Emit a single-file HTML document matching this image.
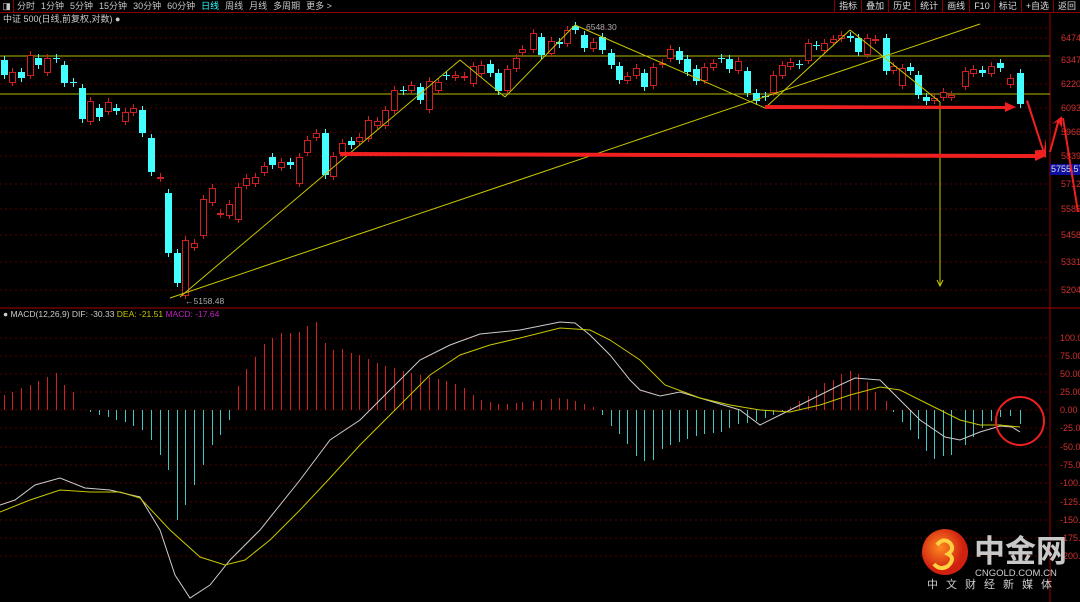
<!DOCTYPE html>
<html><head><meta charset="utf-8"><style>
html,body{margin:0;padding:0;background:#000;width:1080px;height:602px;overflow:hidden;font-family:"Liberation Sans","Noto Sans CJK SC",sans-serif}
#top{position:absolute;left:0;top:0;width:1080px;height:12px;border-bottom:1px solid #8a0000;font-size:9px;color:#c8c8c8;line-height:12px;white-space:nowrap}
#top span{margin-right:6px}
#rb{position:absolute;right:0;top:0;height:12px;display:flex}
#rb div{border-left:1px solid #8a0000;padding:0 4px;font-size:9px;color:#ddd;line-height:12px}
svg{position:absolute;left:0;top:0}
</style></head><body>
<svg id="s" width="1080" height="602" xmlns="http://www.w3.org/2000/svg"></svg>
<div id="top"><span style="display:inline-block;width:13px;border-right:1px solid #8a0000;margin-right:3px;text-align:center">◨</span><span>分时</span><span>1分钟</span><span>5分钟</span><span>15分钟</span><span>30分钟</span><span>60分钟</span><span style="color:#3ff">日线</span><span>周线</span><span>月线</span><span>多周期</span><span>更多 &gt;</span>
<div id="rb"><div>指标</div><div>叠加</div><div>历史</div><div>统计</div><div>画线</div><div>F10</div><div>标记</div><div>+自选</div><div>返回</div></div></div>
<script>
const s=document.getElementById('s');let h='';
const R='#d02020',C='#4ff';
const ax=[[38,'6474'],[60,'6347'],[84,'6220'],[108,'6093'],[132,'5966'],[156,'5839'],[184,'5712'],[209,'5585'],[235,'5458'],[262,'5331'],[290,'5204']];
ax.forEach(a=>{h+=`<line x1="0" x2="1050" y1="${a[0]}" y2="${a[0]}" stroke="#5a0000" stroke-dasharray="2,3"/><text x="1061" y="${a[0]+3}" fill="#d03030" font-size="9">${a[1]}</text>`});
const mx=[[338,'100.0'],[356,'75.00'],[374,'50.00'],[392,'25.00'],[410,'0.00'],[428,'-25.00'],[447,'-50.00'],[465,'-75.00'],[483,'-100.0'],[502,'-125.0'],[520,'-150.0'],[538,'-175.0'],[556,'-200.0']];
mx.forEach(a=>{h+=`<line x1="0" x2="1050" y1="${a[0]}" y2="${a[0]}" stroke="#5a0000" stroke-dasharray="2,3"/><text x="1060" y="${a[0]+3}" fill="#d03030" font-size="9">${a[1]}</text>`});
h+=`<line x1="0" x2="1050" y1="28" y2="28" stroke="#5a0000" stroke-dasharray="2,3"/>`;
h+=`<line x1="1050" x2="1050" y1="13" y2="602" stroke="#a00000"/><line x1="0" x2="1080" y1="308" y2="308" stroke="#a00000"/>`;
h+=`<rect x="1050" y="164" width="30" height="11" fill="#1010a0"/><text x="1051" y="172" fill="#ddd" font-size="9">5755.57</text>`;
h+=`<line x1="0" x2="1050" y1="56" y2="56" stroke="#b8b800"/><line x1="0" x2="1050" y1="94" y2="94" stroke="#b8b800"/>`;
h+=`<text x="3" y="22" fill="#ccc" font-size="9">中证 500(日线,前复权,对数) ●</text>`;
h+=`<text x="3" y="317" font-size="8.5"><tspan fill="#ccc">● MACD(12,26,9) DIF: -30.33 </tspan><tspan fill="#c8c800">DEA: -21.51 </tspan><tspan fill="#c020c0">MACD: -17.64</tspan></text>`;
const K=[[4,60,75,C],[12,72,82,R],[21,72,78,C],[30,55,75,R],[38,58,65,C],[47,58,72,R],[56,58,59,C],[64,65,83,C],[73,82,83,C],[82,88,119,C],[90,101,121,R],[99,108,117,C],[108,102,111,R],[116,108,111,C],[125,112,121,R],[133,108,112,R],[142,110,133,C],[151,138,172,C],[160,177,178,R],[168,193,253,C],[177,253,283,C],[185,240,295,R],[194,243,247,R],[203,199,235,R],[212,188,202,R],[220,213,214,R],[229,204,215,R],[238,187,219,R],[246,178,185,R],[255,177,183,R],[264,166,172,R],[272,157,165,C],[281,162,167,R],[290,162,165,C],[299,157,183,R],[307,140,152,R],[316,133,137,R],[325,133,175,C],[333,156,176,R],[342,143,153,R],[351,141,145,C],[359,137,141,R],[368,120,138,R],[377,121,125,R],[385,110,125,R],[394,90,110,R],[403,90,91,C],[411,85,90,R],[420,87,100,C],[429,81,109,R],[438,82,90,R],[446,75,76,C],[455,75,77,R],[464,76,77,R],[473,66,83,R],[481,65,73,R],[490,64,73,C],[498,73,91,C],[507,69,90,R],[516,58,68,R],[522,49,52,R],[533,33,49,R],[541,37,55,C],[551,41,53,R],[559,42,44,C],[567,30,43,R],[575,26,30,C],[584,35,48,C],[593,42,48,R],[602,37,50,C],[611,53,65,C],[619,66,80,C],[627,76,80,R],[636,68,75,R],[644,73,87,C],[653,67,85,R],[662,63,64,R],[670,49,58,R],[679,51,60,C],[687,59,72,C],[696,69,81,C],[704,67,80,R],[713,63,67,R],[721,58,59,C],[729,59,69,C],[738,61,70,R],[747,71,93,C],[756,93,101,C],[765,96,97,C],[773,75,92,R],[782,65,75,R],[790,62,66,R],[799,64,65,C],[808,43,60,R],[816,45,46,C],[824,43,50,R],[833,39,42,R],[841,35,38,R],[850,36,38,C],[858,38,52,C],[867,38,54,R],[875,39,40,R],[886,38,71,C],[893,66,70,R],[902,68,85,R],[910,67,71,C],[918,75,95,C],[926,97,101,C],[934,98,100,R],[943,92,97,R],[951,95,97,R],[965,71,86,R],[973,69,73,R],[982,70,73,C],[991,66,73,R],[1000,63,68,C],[1010,78,84,R],[1020,73,104,C]];
K.forEach(k=>{const[x,t,b,c]=k;const wt=t-4,wb=b+4;h+=`<line x1="${x+.5}" x2="${x+.5}" y1="${wt}" y2="${wb}" stroke="${c}"/>`;
if(c==C)h+=`<rect x="${x-3}" y="${t}" width="7" height="${Math.max(1,b-t)}" fill="${C}"/>`;else h+=`<rect x="${x-2.5}" y="${t+.5}" width="6" height="${Math.max(1,b-t)}" fill="#000" stroke="${R}"/>`;});
const Y='#c8c800';
[[180,297,460,60],[170,298,980,24],[460,60,505,97],[505,97,575,25],[575,25,765,108],[765,108,850,30],[850,30,940,102]].forEach(l=>h+=`<line x1="${l[0]}" y1="${l[1]}" x2="${l[2]}" y2="${l[3]}" stroke="${Y}" stroke-width="1"/>`);
h+=`<line x1="940" y1="102" x2="940" y2="285" stroke="${Y}"/><path d="M937 280 L940 286 L943 280" stroke="${Y}" fill="none"/>`;
h+=`<text x="586" y="30" fill="#aaa" font-size="8.5">6548.30</text><text x="185" y="304" fill="#aaa" font-size="8.5">←5158.48</text>`;
h+=`<path d="M340 152 L1035 154 L1035 150 L1046 156 L1035 161 L1035 158 L340 156Z" fill="#f02020"/>`;
h+=`<path d="M765 105 L1005 106 L1005 102 L1016 107 L1005 112 L1005 109 L765 109Z" fill="#f02020"/>`;
h+=`<path d="M1028 100 L1044 150 L1046 138 L1046 158 L1036 150 L1042 150 L1026 101Z" fill="#f02020"/>`;
h+=`<path d="M1049 152 L1057 122 L1052 124 L1062 116 L1062 128 L1059 123 L1051 152Z" fill="#f02020"/>`;
h+=`<path d="M1064 118 L1079 212 L1077 212 L1062 118Z" fill="#f02020"/>`;
// MACD bars by x keypoints
const P=[[0,14],[30,25],[56,37],[64,25],[73,18],[80,1],[90,-2],[110,-8],[125,-12],[142,-20],[151,-30],[160,-45],[168,-60],[177,-110],[185,-95],[194,-75],[203,-55],[212,-35],[220,-25],[229,-10],[233,-2],[237,22],[246,41],[255,53],[264,66],[272,72],[281,77],[290,77],[299,78],[307,84],[316,88],[325,67],[333,60],[342,61],[351,57],[360,55],[380,45],[400,40],[420,35],[440,30],[460,25],[480,10],[500,5],[520,8],[540,10],[560,12],[580,8],[595,2],[600,-3],[610,-15],[620,-25],[635,-45],[650,-55],[660,-40],[670,-35],[690,-28],[700,-25],[720,-22],[735,-15],[760,-10],[780,-2],[790,3],[800,10],[810,15],[818,22],[827,30],[835,30],[845,40],[855,38],[865,30],[875,18],[885,10],[893,-2],[905,-15],[915,-25],[925,-40],[935,-50],[945,-45],[955,-45],[965,-35],[975,-25],[985,-15],[995,-8],[1008,-5],[1020,-14]];
function hv(x){for(let i=0;i<P.length-1;i++){if(x>=P[i][0]&&x<=P[i+1][0]){const t=(x-P[i][0])/(P[i+1][0]-P[i][0]);return P[i][1]+t*(P[i+1][1]-P[i][1]);}}return 0;}
K.forEach(k=>{const v=Math.round(hv(k[0]));if(!v)return;const x=k[0]+.5;h+=`<line x1="${x}" x2="${x}" y1="410" y2="${410-v}" stroke="${v>0?'#d02020':'#40c8c8'}"/>`;});
h+=`<polyline fill="none" stroke="#ccc" points="0,505 15,500 35,485 60,478 85,488 110,490 140,497 160,530 175,575 190,598 210,585 230,560 260,530 300,480 330,440 360,420 390,390 420,360 450,345 480,334 520,330 560,322 575,323 590,335 610,355 630,380 640,390 660,396 680,392 700,398 740,410 760,425 780,415 810,400 840,385 855,378 880,380 895,395 920,420 945,437 960,440 980,432 1000,426 1012,427 1020,432"/>`;
h+=`<polyline fill="none" stroke="${Y}" points="0,512 30,500 60,490 90,492 120,492 140,498 170,530 200,557 225,565 245,560 270,540 300,510 330,478 360,445 400,405 430,375 460,355 490,345 520,338 560,328 590,330 610,340 640,360 665,385 700,398 730,405 760,410 790,412 820,405 850,395 880,387 900,390 930,405 960,420 980,425 1000,425 1020,427"/>`;
h+=`<circle cx="1020" cy="421" r="24" fill="none" stroke="#f02020" stroke-width="2"/>`;
h+=`<defs><radialGradient id="g" cx="40%" cy="40%"><stop offset="0" stop-color="#ff8a20"/><stop offset="1" stop-color="#d02010"/></radialGradient></defs><circle cx="945" cy="552" r="23" fill="url(#g)"/><path d="M937 545 q6 -8 13 -2 q5 6 -2 11 q8 4 0 12 q-8 5 -14 -2" stroke="#ffd040" stroke-width="4" fill="none"/>`;
h+=`<text x="974" y="562" fill="#c8c8c8" font-size="31" font-weight="bold" font-family="Noto Sans CJK SC,sans-serif">中金网</text>`;
h+=`<text x="975" y="576" fill="#ccc" font-size="9.5">CNGOLD.COM.CN</text>`;
h+=`<text x="927" y="588" fill="#ccc" font-size="11" letter-spacing="8" font-family="Noto Sans CJK SC,sans-serif">中文财经新媒体</text>`;
s.innerHTML=h;
</script>
</body></html>
